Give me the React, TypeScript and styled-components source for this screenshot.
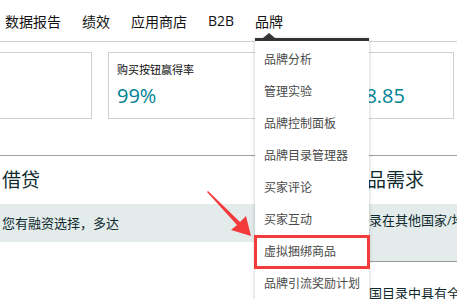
import React from 'react';
import styled, { createGlobalStyle } from 'styled-components';

const GlobalStyle = createGlobalStyle`
  html, body {
    margin: 0;
    padding: 0;
    background: #fff;
    overflow: hidden;
  }
  body {
    font-family: "Open Sans", "Noto Sans CJK SC", sans-serif;
    color: #0f1111;
  }
`;

const navItems = ['数据报告', '绩效', '应用商店', 'B2B'];

const menuItems = [
  '品牌分析',
  '管理实验',
  '品牌控制面板',
  '品牌目录管理器',
  '买家评论',
  '买家互动',
  '虚拟捆绑商品',
  '品牌引流奖励计划',
];

const App: React.FC = () => {
  return (
    <Page>
      <GlobalStyle />
      <Nav>
        {navItems.map((item) => (
          <NavItem key={item}>{item}</NavItem>
        ))}
        <NavItem>
          品牌
          <Dropdown>
            <Caret />
            {menuItems.map((item) => (
              <MenuItem key={item} highlighted={item === '虚拟捆绑商品'}>
                {item}
              </MenuItem>
            ))}
          </Dropdown>
        </NavItem>
      </Nav>

      <CardRow>
        {/* 첫 카드는 화면 왼쪽 밖으로 잘려 있음 */}
        <Card width={92} />
        <Card width={184}>
          <CardTitle>购买按钮赢得率</CardTitle>
          <CardValue>99%</CardValue>
        </Card>
        <Card width={146}>
          <CardTitle>平均售价</CardTitle>
          <CardValue>US$28.85</CardValue>
        </Card>
      </CardRow>

      <Sections>
        <LeftCol>
          <Heading>借贷</Heading>
          <Banner>您有融资选择，多达</Banner>
        </LeftCol>
        <RightCol>
          <Heading indent={14}>全球商品需求</Heading>
          <Banner tall>了解商品目录在其他国家/地区的需求</Banner>
          <Note>该品牌在美国目录中具有全球需求</Note>
        </RightCol>
      </Sections>

      <Arrow width="60" height="60" viewBox="0 0 60 60">
        <polygon
          points="7,7 8,6 40,37 46,31 51,51 31,45 37,40"
          fill="#f43b3b"
        />
      </Arrow>
    </Page>
  );
};

export default App;

// Styled-components
const Page = styled.div`
  position: relative;
  width: 457px;
  height: 299px;
  overflow: hidden;
`;

const Nav = styled.div`
  display: flex;
  align-items: center;
  gap: 21px;
  height: 41px;
  padding-left: 5px;
  border-bottom: 1px solid #cfcfcf;
`;

const NavItem = styled.div`
  position: relative;
  display: flex;
  align-items: center;
  height: 41px;
  font-size: 14px;
  color: #111;
  white-space: nowrap;
`;

const Dropdown = styled.div`
  position: absolute;
  top: 38px;
  left: 0;
  z-index: 10;
  width: 114px;
  padding-top: 3px;
  border-top: 3px solid #333;
  background: #fff;
  box-shadow: 0 1px 4px rgba(0, 0, 0, 0.22);
`;

const Caret = styled.span`
  position: absolute;
  top: -8px;
  left: 8px;
  width: 0;
  height: 0;
  border-left: 6px solid transparent;
  border-right: 6px solid transparent;
  border-bottom: 5px solid #333;
`;

const MenuItem = styled.div<{ highlighted?: boolean }>`
  height: 32px;
  line-height: 32px;
  padding-left: 9px;
  font-size: 12px;
  color: #4a4a4a;
  white-space: nowrap;
  outline: ${({ highlighted }) =>
    highlighted ? '3px solid #f23c3c' : 'none'};
  outline-offset: -2px;
`;

const CardRow = styled.div`
  display: flex;
  gap: 16px;
  margin-top: 10px;
`;

const Card = styled.div<{ width: number }>`
  flex: none;
  box-sizing: border-box;
  width: ${({ width }) => width}px;
  height: 67px;
  padding: 9px 8px 0;
  border: 1px solid #d0d0d0;

  &:first-child {
    border-left: none;
  }
`;

const CardTitle = styled.div`
  font-size: 11px;
  line-height: 16px;
  color: #111;
  white-space: nowrap;
`;

const CardValue = styled.div`
  margin-top: 4px;
  font-size: 20px;
  line-height: 28px;
  color: #008296;
  white-space: nowrap;
`;

const Sections = styled.div`
  display: flex;
  margin-top: 36px;
  padding-top: 12px;
  border-top: 1px solid #a0a0a0;
`;

const LeftCol = styled.div`
  flex: none;
  width: 280px;
`;

const RightCol = styled.div`
  flex: none;
  width: 300px;
  margin-left: 16px;
`;

const Heading = styled.div<{ indent?: number }>`
  height: 24px;
  line-height: 24px;
  margin-bottom: 12px;
  padding-left: ${({ indent }) => indent ?? 2}px;
  font-size: 19px;
  color: #0f2a2e;
  white-space: nowrap;
`;

const Banner = styled.div<{ tall?: boolean }>`
  box-sizing: border-box;
  height: ${({ tall }) => (tall ? 58 : 38)}px;
  padding: ${({ tall }) => (tall ? '6px 8px 0' : '0 2px')};
  line-height: ${({ tall }) => (tall ? 20 : 38)}px;
  font-size: 13px;
  color: #0f2a2e;
  background: #e3ebeb;
  border-bottom: ${({ tall }) => (tall ? '1px solid #9a9a9a' : 'none')};
  white-space: nowrap;
`;

const Note = styled.div`
  margin-top: 21px;
  padding-left: 8px;
  font-size: 13px;
  line-height: 20px;
  color: #0f2a2e;
  white-space: nowrap;
`;

const Arrow = styled.svg`
  position: absolute;
  left: 200px;
  top: 185px;
  z-index: 20;
`;
